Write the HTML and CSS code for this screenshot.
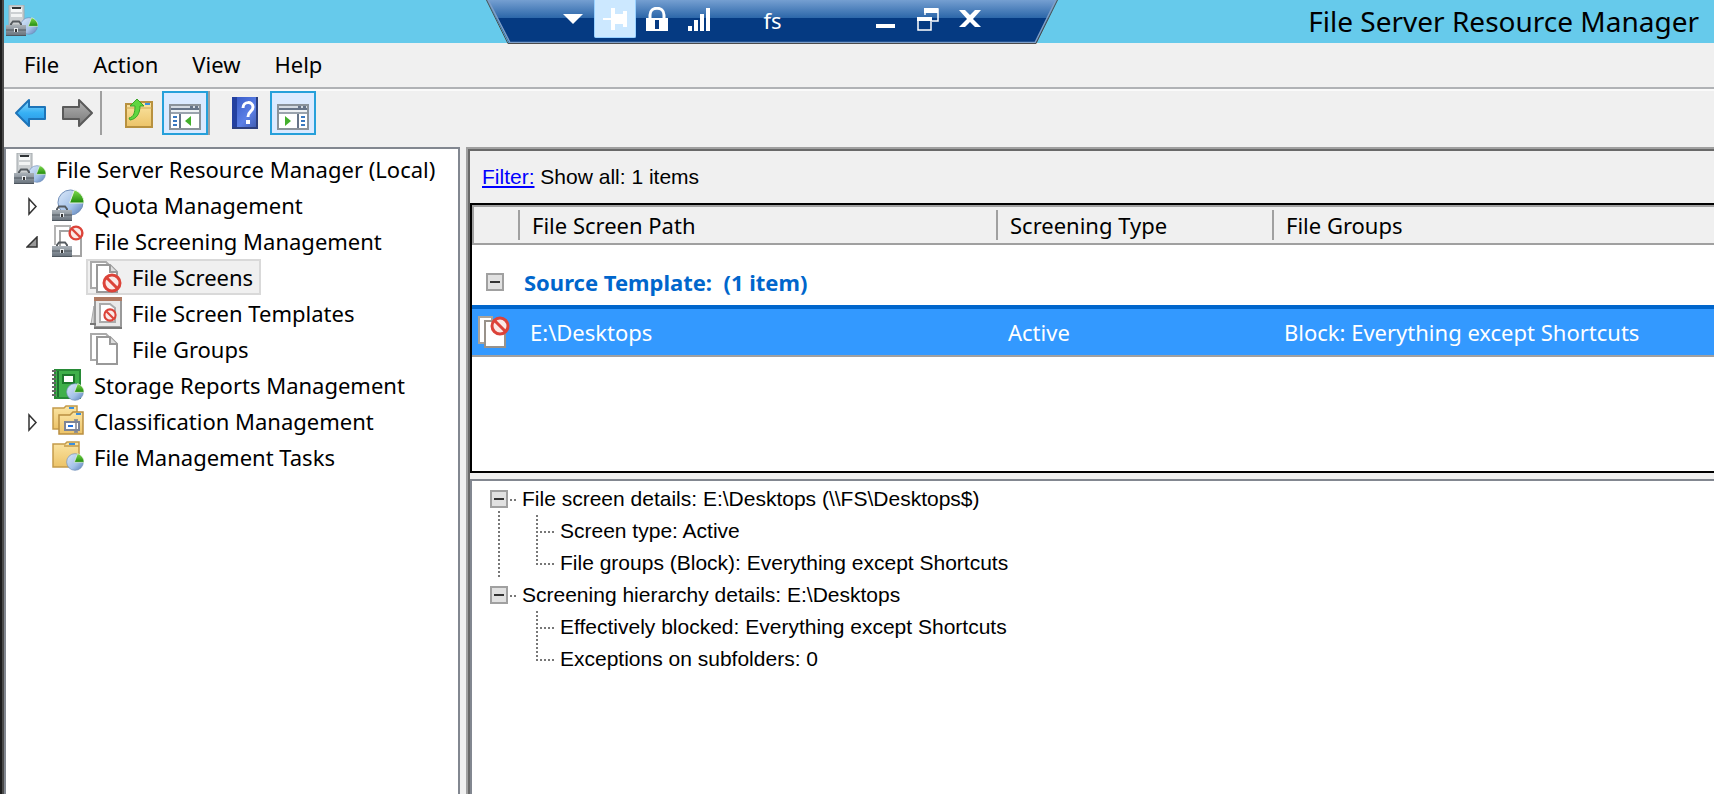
FILE: index.html
```html
<!DOCTYPE html>
<html lang="en">
<head>
    <meta charset="UTF-8">
    <meta name="viewport" content="width=device-width, initial-scale=1.0">
    <title>File Server Resource Manager</title>
    <link rel="stylesheet" href="styles.css">
</head>
<body>
    <!-- shared icon shapes -->
    <svg class="sprites" aria-hidden="true">
        <defs>
            <linearGradient id="g-sphere" x1="0" y1="0" x2="1" y2="1">
                <stop offset="0" stop-color="#dbe8f8"/>
                <stop offset="0.6" stop-color="#a3c1e8"/>
                <stop offset="1" stop-color="#567db5"/>
            </linearGradient>
            <linearGradient id="g-wedge" x1="0" y1="0" x2="0" y2="1">
                <stop offset="0" stop-color="#7fdc4c"/>
                <stop offset="1" stop-color="#1f8a0c"/>
            </linearGradient>
            <linearGradient id="g-folder" x1="0" y1="0" x2="0" y2="1">
                <stop offset="0" stop-color="#fbe5a4"/>
                <stop offset="1" stop-color="#ecc368"/>
            </linearGradient>
            <linearGradient id="g-steel" x1="0" y1="0" x2="0" y2="1">
                <stop offset="0" stop-color="#a9b1b8"/>
                <stop offset="1" stop-color="#66707a"/>
            </linearGradient>
            <linearGradient id="g-blue" x1="0" y1="0" x2="0" y2="1">
                <stop offset="0" stop-color="#8fdcff"/>
                <stop offset="0.5" stop-color="#36b0f4"/>
                <stop offset="1" stop-color="#2a8fe0"/>
            </linearGradient>
            <linearGradient id="g-grey" x1="0" y1="0" x2="0" y2="1">
                <stop offset="0" stop-color="#b4b4b4"/>
                <stop offset="1" stop-color="#777"/>
            </linearGradient>
            <linearGradient id="g-help" x1="0" y1="0" x2="1" y2="1">
                <stop offset="0" stop-color="#3457c4"/>
                <stop offset="0.6" stop-color="#5c80e6"/>
                <stop offset="1" stop-color="#3a56a8"/>
            </linearGradient>
        </defs>
        <symbol id="toolbox" viewBox="0 0 20 16">
            <path d="M5 6V4L7 1.500H13L15 4V6" fill="none" stroke="#555b60" stroke-width="2"/>
            <rect x="0" y="5" width="20" height="11" fill="url(#g-steel)"/>
            <path d="M0 10H20M0 15.500H20" stroke="#4e565e"/>
            <rect x="8" y="8" width="4" height="4" fill="#e8ecef"/>
            <rect x="9" y="9" width="2" height="3" fill="#333"/>
        </symbol>
        <symbol id="pie" viewBox="0 0 28 28">
            <circle cx="14" cy="14" r="13" fill="url(#g-sphere)" stroke="#6e8db8"/>
            <path d="M13 14.500L18 1C24 3 28 8 28 14.500Z" fill="url(#g-wedge)" stroke="#eaf6e4" stroke-width="1"/>
        </symbol>
        <symbol id="ban" viewBox="0 0 20 20">
            <circle cx="10" cy="10" r="8" fill="#fbe9e7" stroke="#dc4339" stroke-width="3"/>
            <path d="M5 5L15 15" stroke="#dc4339" stroke-width="3"/>
        </symbol>
        <symbol id="pages" viewBox="0 0 32 32">
            <path d="M1 1H16L21 6V27H1Z" fill="#fff" stroke="#aaa" stroke-width="2"/>
            <path d="M7 4H20L27 11V31H7Z" fill="#fff" stroke="#999" stroke-width="2"/>
            <path d="M20 4V11H27" fill="#ddd" stroke="#999" stroke-width="2"/>
        </symbol>
        <symbol id="server" viewBox="0 0 32 32">
            <rect x="3" y="0" width="15" height="20" fill="#ccd0d2" stroke="#a4aaad"/>
            <rect x="5" y="3" width="11" height="4" fill="#f6f8f8"/>
            <rect x="6" y="2" width="9" height="2" fill="#2f3436"/>
            <rect x="5" y="9" width="11" height="3" fill="#f2f4f4"/>
            <use href="#pie" x="14" y="12" width="18" height="18"/>
            <use href="#toolbox" x="0" y="15" width="20" height="16"/>
        </symbol>
        <symbol id="quota" viewBox="0 0 32 32">
            <use href="#pie" x="5" y="0" width="27" height="27"/>
            <use href="#toolbox" x="0" y="16" width="20" height="16"/>
        </symbol>
        <symbol id="screening" viewBox="0 0 32 32">
            <path d="M3 20V1H18V8" fill="#fff" stroke="#b4b4b4" stroke-width="2"/>
            <path d="M8 6H29V31H8Z" fill="#fff" stroke="#a4a4a4" stroke-width="2"/>
            <use href="#ban" x="16" y="0" width="16" height="16"/>
            <use href="#toolbox" x="0" y="16" width="20" height="16"/>
        </symbol>
        <symbol id="screens" viewBox="0 0 32 32">
            <use href="#pages" width="32" height="32"/>
            <use href="#ban" x="12" y="12" width="20" height="20"/>
        </symbol>
        <symbol id="screen-row" viewBox="0 0 32 32">
            <path d="M1 1H14V27H1Z" fill="#fff" stroke="#aaa39a" stroke-width="2"/>
            <path d="M7 5H27V31H7Z" fill="#fff" stroke="#99928a" stroke-width="2"/>
            <use href="#ban" x="12" y="0" width="20" height="20"/>
        </symbol>
        <symbol id="template" viewBox="0 0 32 32">
            <path d="M1 27L4 9V27Z" fill="#ddd" stroke="#aaa"/>
            <rect x="5" y="1" width="26" height="29" fill="#e9e9e9" stroke="#999" stroke-width="2"/>
            <path d="M0 27H6M4 31H32" stroke="#777" stroke-width="2"/>
            <rect x="4" y="0" width="28" height="4" fill="#b07a62"/>
            <path d="M10 7H20L25 11V25H10Z" fill="#fff" stroke="#aaa" stroke-width="2"/>
            <use href="#ban" x="13" y="11" width="14" height="14"/>
        </symbol>
        <symbol id="report" viewBox="0 0 32 32">
            <rect x="3" y="1" width="25" height="28" fill="#3fb04a" stroke="#278a36" stroke-width="2"/>
            <path d="M6 2V28" stroke="#1d7030" stroke-width="2"/>
            <path d="M2 1V29" stroke="#666" stroke-width="4" stroke-dasharray="2 2"/>
            <rect x="11" y="6" width="11" height="8" fill="#fff" stroke="#1c7a2c" stroke-width="2"/>
            <use href="#pie" x="14" y="14" width="18" height="18"/>
        </symbol>
        <symbol id="classify" viewBox="0 0 32 32">
            <path d="M1 3H12L14 1H25V24H1Z" fill="url(#g-folder)" stroke="#c39a4a" stroke-width="1.500"/>
            <rect x="17" y="2" width="5" height="2" fill="#3a8fe0"/>
            <path d="M7 10H18L21 7H31V29H7Z" fill="url(#g-folder)" stroke="#b98f42" stroke-width="1.500"/>
            <rect x="24" y="8" width="5" height="2" fill="#3a8fe0"/>
            <rect x="13" y="17" width="14" height="8" fill="#fff" stroke="#7c8496" stroke-width="2"/>
            <rect x="16" y="20" width="5" height="2" fill="#1f6fe0"/>
            <path d="M24 15V27M22 15H26M22 27H26" stroke="#7c8496" stroke-width="1.500"/>
        </symbol>
        <symbol id="task" viewBox="0 0 32 32">
            <path d="M1 3H13L15 1H27V26H1Z" fill="url(#g-folder)" stroke="#c39a4a" stroke-width="1.500"/>
            <path d="M12 5H27" stroke="#c39a4a" stroke-width="1.500"/>
            <rect x="17" y="2" width="6" height="2" fill="#3a8fe0"/>
            <use href="#pie" x="14" y="12" width="18" height="18"/>
        </symbol>
        <symbol id="arrow" viewBox="0 0 32 30">
            <path d="M1 15L14 2V9H30V21H14V28Z" stroke-width="2" stroke-linejoin="round"/>
        </symbol>
        <symbol id="window-pane" viewBox="0 0 32 26">
            <rect x="1" y="1" width="30" height="24" fill="#fff" stroke="#8a929a" stroke-width="2"/>
            <path d="M2 3H30" stroke="#d4dbe3" stroke-width="2"/>
            <path d="M2 5H30" stroke="#667488" stroke-width="2"/>
            <path d="M21 3H24M26 3H29" stroke="#667488" stroke-width="2"/>
            <path d="M2 9H30" stroke="#9aa3ad" stroke-width="2"/>
            <path d="M2 7H30" stroke="#eef1f4" stroke-width="2"/>
        </symbol>
    </svg>

    <div class="app">
        <header class="titlebar">
            <svg class="icon"><use href="#server"/></svg>
            <h1>File Server Resource Manager</h1>
            <div class="connection-bar">
                <svg class="bar-shape" viewBox="0 0 574 44" preserveAspectRatio="none" aria-hidden="true">
                    <defs>
                        <linearGradient id="g-bar" x1="0" y1="0" x2="0" y2="1">
                            <stop offset="0" stop-color="#759fd1"/>
                            <stop offset="0.430" stop-color="#2a65a8"/>
                            <stop offset="0.430" stop-color="#053a82"/>
                            <stop offset="1" stop-color="#053a82"/>
                        </linearGradient>
                    </defs>
                    <path d="M1 0L23 43H552L573 0Z" fill="url(#g-bar)"/>
                    <path d="M2 0L24 42.500H551L572 0" fill="none" stroke="#7f9fc8" stroke-width="1.500"/>
                    <path d="M0.500 0L22 43.500H552L573.500 0" fill="none" stroke="#4a4a4a"/>
                </svg>
                <div class="bar-controls">
                    <button class="bar-button" aria-label="Options">
                        <svg width="20" height="12"><path d="M0 1H20L10 11Z" fill="#fff"/></svg>
                    </button>
                    <button class="bar-button pinned" aria-label="Pin">
                        <svg width="24" height="22"><path d="M0 10H8V0H12V6H20V3H24V19H20V16H12V22H8V12H0Z" fill="#fff"/></svg>
                    </button>
                    <button class="bar-button" aria-label="Security">
                        <svg width="22" height="24"><path d="M4 12V8C4 -1 18 -1 18 8V12" fill="none" stroke="#fff" stroke-width="3"/><rect y="11" width="22" height="13" fill="#fff"/><rect x="9" y="13" width="4" height="9" fill="#053a82"/></svg>
                    </button>
                    <button class="bar-button" aria-label="Signal">
                        <svg width="22" height="24"><path d="M0 19H4V24H0ZM6 13H10V24H6ZM12 7H16V24H12ZM18 1H22V24H18Z" fill="#fff"/></svg>
                    </button>
                    <span class="bar-name">fs</span>
                    <button class="bar-button" aria-label="Minimize">
                        <svg width="20" height="20"><rect y="15" width="19" height="4" fill="#fff"/></svg>
                    </button>
                    <button class="bar-button" aria-label="Restore">
                        <svg width="22" height="24"><path d="M8 8V2H21V14H15" fill="none" stroke="#fff" stroke-width="1.500"/><rect x="7" y="1" width="14" height="5" fill="#fff"/><rect x="1" y="11" width="13" height="12" fill="#053a82" stroke="#fff" stroke-width="1.500"/><rect x="0" y="10" width="15" height="4" fill="#fff"/></svg>
                    </button>
                    <button class="bar-button" aria-label="Close">
                        <svg width="22" height="18"><path d="M0 0H6L11 5L16 0H22L14 9L22 17H16L11 12L6 17H0L8 9Z" fill="#fff"/></svg>
                    </button>
                </div>
            </div>
        </header>

        <nav class="menu">
            <button>File</button>
            <button>Action</button>
            <button>View</button>
            <button>Help</button>
        </nav>

        <div class="toolbar">
            <button class="tool" aria-label="Back">
                <svg width="32" height="30" fill="url(#g-blue)" stroke="#1d74b8"><use href="#arrow"/></svg>
            </button>
            <button class="tool" aria-label="Forward">
                <svg class="flip" width="32" height="30" fill="url(#g-grey)" stroke="#5a5a5a"><use href="#arrow"/></svg>
            </button>
            <span class="separator"></span>
            <button class="tool spaced" aria-label="Up one level">
                <svg width="28" height="30">
                    <path d="M1 6H12L14 4H27V29H1Z" fill="url(#g-folder)" stroke="#b8913f" stroke-width="2"/>
                    <path d="M1 10H27" stroke="#d0a953" stroke-width="1"/>
                    <rect x="20" y="5" width="5" height="2" fill="#3a8fe0"/>
                    <path d="M4 20C9 19 10 14 10 8H5L12 1L19 8H15C15 15 12 21 5 22Z" fill="#5fd640" stroke="#3aa526"/>
                </svg>
            </button>
            <button class="tool active" aria-label="Show or hide console tree">
                <svg class="lowered" width="32" height="26">
                    <use href="#window-pane"/>
                    <path d="M11 10V24" stroke="#667488" stroke-width="2"/>
                    <path d="M4 13H8M4 17H8M4 21H8" stroke="#3a78c0" stroke-width="2"/>
                    <path d="M22 12V22L16 17Z" fill="#44b02c"/>
                </svg>
            </button>
            <span class="separator"></span>
            <button class="tool help" aria-label="Help">
                <svg width="26" height="32">
                    <rect width="26" height="32" fill="url(#g-help)"/>
                    <rect width="5" height="32" fill="#2340a0"/>
                    <path d="M0 31H26M25 0V32" stroke="#2c3f7c" stroke-width="2"/>
                    <path d="M11 11C11 4 21 4 21 10C21 15 16 14 16 20" fill="none" stroke="#fff" stroke-width="3"/>
                    <rect x="14" y="23" width="4" height="4" fill="#fff"/>
                </svg>
            </button>
            <button class="tool active" aria-label="Show or hide action pane">
                <svg class="lowered" width="32" height="26">
                    <use href="#window-pane"/>
                    <path d="M21 10V24" stroke="#667488" stroke-width="2"/>
                    <path d="M24 13H28M24 17H28M24 21H28" stroke="#3a78c0" stroke-width="2"/>
                    <path d="M8 12V22L14 17Z" fill="#44b02c"/>
                </svg>
            </button>
        </div>

        <main class="panes">
            <aside class="tree">
                <div class="node"><svg class="icon"><use href="#server"/></svg>File Server Resource Manager (Local)</div>
                <ul>
                    <li class="node">
                        <button class="expander" aria-label="Expand"><svg width="12" height="20"><path d="M3 3V18L10 10.500Z" fill="#fff" stroke="#333" stroke-width="1.500"/></svg></button>
                        <svg class="icon"><use href="#quota"/></svg>Quota Management
                    </li>
                    <li>
                        <div class="node">
                            <button class="expander" aria-label="Collapse"><svg width="12" height="12"><path d="M1 11L11 1V11Z" fill="#999" stroke="#333" stroke-width="1.500"/></svg></button>
                            <svg class="icon"><use href="#screening"/></svg>File Screening Management
                        </div>
                        <ul class="branch">
                            <li class="node selected"><svg class="icon"><use href="#screens"/></svg>File Screens</li>
                            <li class="node"><svg class="icon"><use href="#template"/></svg>File Screen Templates</li>
                            <li class="node"><svg class="icon"><use href="#pages"/></svg>File Groups</li>
                        </ul>
                    </li>
                    <li class="node">
                        <span class="expander"></span>
                        <svg class="icon"><use href="#report"/></svg>Storage Reports Management
                    </li>
                    <li class="node">
                        <button class="expander" aria-label="Expand"><svg width="12" height="20"><path d="M3 3V18L10 10.500Z" fill="#fff" stroke="#333" stroke-width="1.500"/></svg></button>
                        <svg class="icon"><use href="#classify"/></svg>Classification Management
                    </li>
                    <li class="node">
                        <span class="expander"></span>
                        <svg class="icon"><use href="#task"/></svg>File Management Tasks
                    </li>
                </ul>
            </aside>

            <section class="content">
                <p class="filter"><a href="#">Filter:</a> Show all: 1 items</p>
                <div class="list">
                    <table>
                        <colgroup>
                            <col class="col-icon">
                            <col class="col-path">
                            <col class="col-type">
                            <col>
                        </colgroup>
                        <thead>
                            <tr>
                                <th></th>
                                <th><span>File Screen Path</span></th>
                                <th><span>Screening Type</span></th>
                                <th><span>File Groups</span></th>
                            </tr>
                        </thead>
                        <tbody>
                            <tr class="group">
                                <td colspan="4">
                                    <div class="group-title"><button class="toggle" aria-label="Collapse group"></button>Source Template:&nbsp; (1 item)</div>
                                </td>
                            </tr>
                            <tr class="row">
                                <td><svg class="icon"><use href="#screen-row"/></svg></td>
                                <td>E:\Desktops</td>
                                <td>Active</td>
                                <td>Block: Everything except Shortcuts</td>
                            </tr>
                        </tbody>
                    </table>
                </div>
                <div class="details">
                    <ul>
                        <li class="detail-group linked">
                            <div class="detail-title"><button class="toggle" aria-label="Collapse"></button>File screen details: E:\Desktops (\\FS\Desktops$)</div>
                            <ul class="detail-items">
                                <li>Screen type: Active</li>
                                <li>File groups (Block): Everything except Shortcuts</li>
                            </ul>
                        </li>
                        <li class="detail-group">
                            <div class="detail-title"><button class="toggle" aria-label="Collapse"></button>Screening hierarchy details: E:\Desktops</div>
                            <ul class="detail-items">
                                <li>Effectively blocked: Everything except Shortcuts</li>
                                <li>Exceptions on subfolders: 0</li>
                            </ul>
                        </li>
                    </ul>
                </div>
            </section>
        </main>
    </div>
</body>
</html>
```
FILE: styles.css
```css
* {
    box-sizing: border-box;
}
body {
    margin: 0;
    font-family: "Noto Sans", "Open Sans", sans-serif;
    font-size: 22px;
    color: #000;
    background-color: #f0f0f0;
}
ul {
    list-style: none;
    margin: 0;
    padding: 0;
}
button {
    font: inherit;
    color: inherit;
    background: none;
    border: none;
    padding: 0;
    display: flex;
    align-items: center;
    justify-content: center;
}
.sprites {
    position: absolute;
    width: 0;
    height: 0;
}
.icon {
    width: 32px;
    height: 32px;
    flex: none;
    display: block;
}
.app {
    display: flex;
    flex-direction: column;
    height: 100vh;
    padding-left: 4px;
    background: linear-gradient(90deg, #1c1c1c 2px, #4a4a4a 2px, #4a4a4a 4px, #f0f0f0 4px);
    overflow: hidden;
}

/* title bar */
.titlebar {
    position: relative;
    display: flex;
    align-items: center;
    justify-content: space-between;
    height: 43px;
    padding: 0 15px 2px 2px;
    background-color: #66caeb;
    flex: none;
}
.titlebar h1 {
    margin: 0;
    font-size: 28px;
    font-weight: normal;
    line-height: 40px;
}
.connection-bar {
    position: absolute;
    top: 0;
    left: calc(45% - 2px);
    width: 572px;
    height: 44px;
    transform: translateX(-50%);
}
.bar-shape {
    position: absolute;
    width: 100%;
    height: 100%;
}
.bar-controls {
    position: relative;
    display: flex;
    height: 38px;
    padding: 0 67px 0 66px;
    color: #fff;
}
.bar-button {
    width: 42px;
    height: 38px;
}
.pinned {
    background-color: #cce8ff;
    border: 1px solid #99d1ff;
    border-top: none;
    border-radius: 0 0 2px 2px;
}
.bar-name {
    flex: 1;
    padding-left: 44px;
    line-height: 40px;
}

/* menu and toolbar */
.menu {
    display: flex;
    gap: 34px;
    height: 48px;
    padding: 0 20px 4px;
    border-bottom: 2px solid #fafafa;
    box-shadow: inset 0 -2px #b0b2b5;
    flex: none;
}
.toolbar {
    display: flex;
    height: 56px;
    padding-left: 4px;
    flex: none;
}
.tool {
    width: 46px;
    height: 44px;
}
.tool.active {
    background-color: #dbeaff;
    border: 2px solid #26a0da;
}
.tool.spaced {
    margin-left: 14px;
}
.tool.help {
    margin: 0 2px 0 12px;
}
.flip {
    transform: scaleX(-1);
}
.lowered {
    margin-top: 8px;
}
.separator {
    width: 2px;
    height: 44px;
    background-color: #a0a0a0;
}

/* panes */
.panes {
    display: flex;
    gap: 6px;
    flex: 1;
    min-height: 0;
}
.tree {
    width: 456px;
    flex: none;
    padding-top: 2px;
    background-color: #fff;
    border: 2px solid #828790;
    border-bottom: none;
}
.node {
    display: flex;
    align-items: center;
    gap: 10px;
    height: 36px;
    padding-left: 8px;
    line-height: 28px;
    white-space: nowrap;
}
.tree > ul > li.node,
.tree > ul > li > .node {
    padding-left: 16px;
}
.expander {
    width: 20px;
    height: 36px;
    padding-top: 2px;
}
.branch .node {
    width: fit-content;
    margin-left: 80px;
    padding: 0 6px 0 2px;
    border: 2px solid transparent;
}
.branch .selected {
    background-color: #f0f0f0;
    border-color: #d9d9d9;
}
.content {
    display: flex;
    flex-direction: column;
    flex: 1;
    min-width: 0;
    border: 2px solid #a0a0a0;
    border-width: 2px 0 0 2px;
    box-shadow: inset 2px 2px #696969;
    padding: 2px 0 0 2px;
}
.filter {
    margin: 0;
    padding-left: 12px;
    height: 52px;
    line-height: 52px;
    font-family: "Liberation Sans", Arial, sans-serif;
    font-size: 21px;
}
.filter a {
    color: #00f;
}
.list {
    height: 270px;
    background-color: #fff;
    border: 2px solid #000;
    border-right: none;
    flex: none;
}
table {
    width: 100%;
    table-layout: fixed;
    border-collapse: separate;
    border-spacing: 0;
}
.col-icon {
    width: 46px;
}
.col-path {
    width: 478px;
}
.col-type {
    width: 276px;
}
th {
    height: 40px;
    padding: 0;
    text-align: left;
    font-weight: normal;
    background-color: #f0f0f0;
    border-top: 2px solid #a0a0a0;
    border-bottom: 2px solid #a0a0a0;
}
th:first-child {
    border-left: 2px solid #a0a0a0;
}
th span {
    display: block;
    padding-left: 12px;
    line-height: 30px;
    border-left: 2px solid #a0a0a0;
}
.group td {
    height: 64px;
    padding: 14px 0 0 14px;
    border-bottom: 4px solid #06c;
}
.group-title {
    display: flex;
    align-items: center;
    gap: 20px;
    color: #06c;
    font-weight: bold;
}
.toggle {
    width: 18px;
    height: 18px;
    flex: none;
    border: 2px solid #a0a0a0;
    background: linear-gradient(#333, #333) center / 10px 2px no-repeat #e1e1e1;
}
.row td {
    height: 48px;
    padding: 0 0 0 12px;
    color: #fff;
    background-color: #39f;
    border-bottom: 2px solid #a0a0a0;
}
.row td:first-child {
    padding-left: 6px;
}

/* details tree, dotted guides are drawn as backgrounds */
.details {
    flex: 1;
    margin-top: 6px;
    padding: 2px 0 0 18px;
    background-color: #fff;
    border: 2px solid #828790;
    border-width: 2px 0 0 2px;
    font-family: "Liberation Sans", Arial, sans-serif;
    font-size: 21px;
    line-height: 32px;
}
.linked {
    background: repeating-linear-gradient(#777 0 2px, transparent 2px 4px) 8px 28px / 2px 74px no-repeat;
}
.detail-title {
    display: flex;
    align-items: center;
    gap: 14px;
    background: repeating-linear-gradient(90deg, #777 0 2px, transparent 2px 4px) 20px 16px / 6px 2px no-repeat;
}
.detail-items {
    margin-left: 46px;
    background: repeating-linear-gradient(#777 0 2px, transparent 2px 4px) 0 0 / 2px 50px no-repeat;
}
.detail-items li {
    padding-left: 24px;
    background: repeating-linear-gradient(90deg, #777 0 2px, transparent 2px 4px) 0 16px / 18px 2px no-repeat;
}
```
